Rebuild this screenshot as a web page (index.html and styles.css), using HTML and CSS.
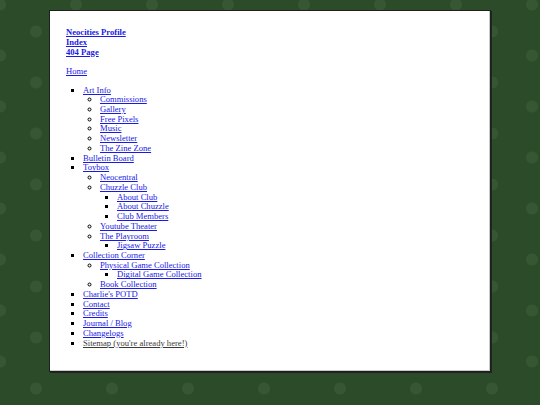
FILE: index.html
```html
<!DOCTYPE html>
<html lang="en">
  <head>
    <meta charset="UTF-8" />
    <meta name="viewport" content="width=device-width, initial-scale=1.0" />
    <title>Sitemap</title>
    <link rel="stylesheet" href="styles.css">
  </head>
  <body>
    <main class="page">
      <p class="top-links">
        <a href="#"><b>Neocities Profile</b></a><br />
        <a href="#"><b>Index</b></a><br />
        <a href="#"><b>404 Page</b></a>
      </p>
      <p><a href="#">Home</a></p>

      <ul class="sitemap">
        <li>
          <a href="#">Art Info</a>
          <ul>
            <li><a href="#">Commissions</a></li>
            <li><a href="#">Gallery</a></li>
            <li><a href="#">Free Pixels</a></li>
            <li><a href="#">Music</a></li>
            <li><a href="#">Newsletter</a></li>
            <li><a href="#">The Zine Zone</a></li>
          </ul>
        </li>
        <li><a href="#">Bulletin Board</a></li>
        <li>
          <a href="#">Toybox</a>
          <ul>
            <li><a href="#">Neocentral</a></li>
            <li>
              <a href="#">Chuzzle Club</a>
              <ul>
                <li><a href="#">About Club</a></li>
                <li><a href="#">About Chuzzle</a></li>
                <li><a href="#">Club Members</a></li>
              </ul>
            </li>
            <li><a href="#">Youtube Theater</a></li>
            <li>
              <a href="#">The Playroom</a>
              <ul>
                <li><a href="#">Jigsaw Puzzle</a></li>
              </ul>
            </li>
          </ul>
        </li>
        <li>
          <a href="#">Collection Corner</a>
          <ul>
            <li>
              <a href="#">Physical Game Collection</a>
              <ul>
                <li><a href="#">Digital Game Collection</a></li>
              </ul>
            </li>
            <li><a href="#">Book Collection</a></li>
          </ul>
        </li>
        <li><a href="#">Charlie's POTD</a></li>
        <li><a href="#">Contact</a></li>
        <li><a href="#">Credits</a></li>
        <li><a href="#">Journal / Blog</a></li>
        <li><a href="#">Changelogs</a></li>
        <li><a class="current" href="#">Sitemap (you're already here!)</a></li>
      </ul>
    </main>
  </body>
</html>
```

FILE: styles.css
```css
@charset 'utf-8';
* {
  box-sizing: border-box;
}

html {
  height: 100%;
}

body {
  margin: 0;
  min-height: 100%;
  padding-top: 10px;
  font-family: "Liberation Serif", "Times New Roman", serif;
  font-size: 8.6px;
  line-height: 9.73px;
  color: #000;
  background-color: #2c4b28;
  background-image:
    radial-gradient(circle, #375632 5.5px, transparent 6.5px),
    radial-gradient(circle, #375632 5.5px, transparent 6.5px);
  background-size: 76px 51px, 76px 51px;
  background-position: -2px 6px, -38px -21px;
}

.page {
  width: 442px;
  height: 362px;
  margin: 0 auto;
  padding: 8px 16px;
  background: #fff;
  border: 1px solid #1f1f1f;
  box-shadow: inset -1px -1px 0 #c8c8c8, 1px 1px 0 #222;
}

p {
  margin: 9.2px 0;
}

a {
  color: #1a1ae6;
}

a.current {
  color: #3a3a3a;
}

ul {
  margin: 0;
  padding-left: 17px;
}

.sitemap {
  margin: 6.8px 0;
}

.sitemap > li {
  list-style-type: square;
}
```
